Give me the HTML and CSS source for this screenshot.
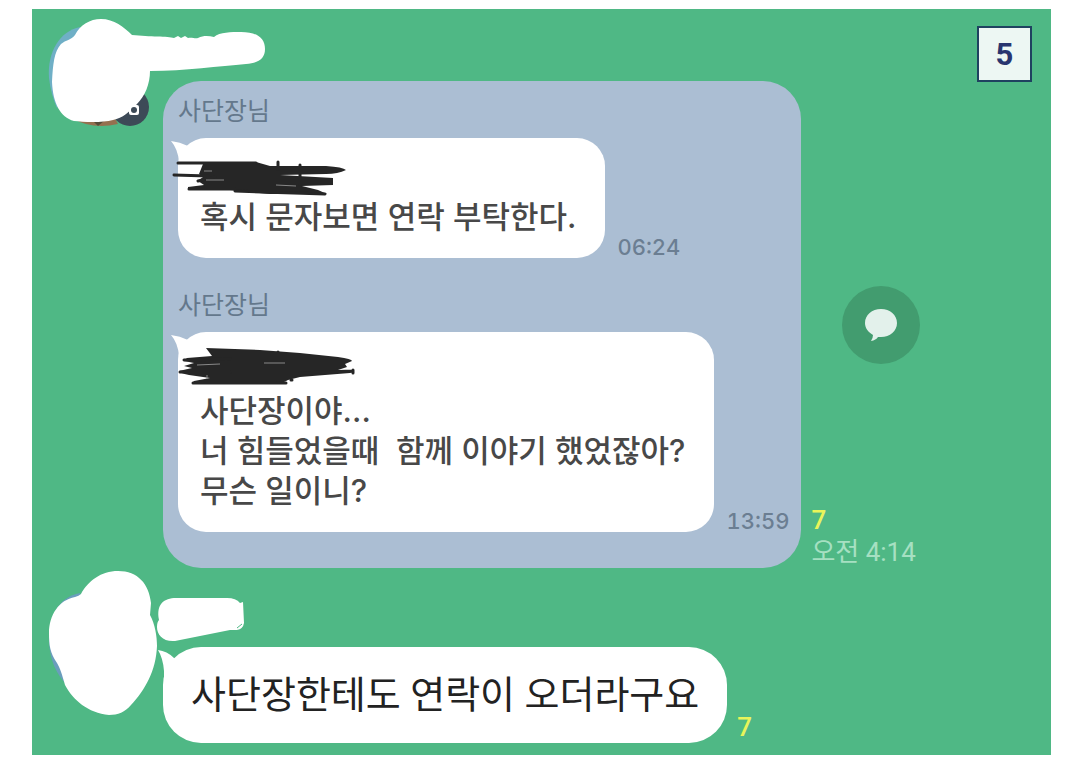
FILE: index.html
```html
<!DOCTYPE html>
<html lang="ko">
<head>
  <meta charset="UTF-8">
  <meta name="viewport" content="width=device-width, initial-scale=1.0">
  <title>사단장님</title>
  <link rel="stylesheet" href="styles.css">
</head>
<body>
  <main class="chat">
    <div class="page-number">5</div>

    <article class="message">
      <div class="avatar">
        <svg class="avatar-mask first" viewBox="32 9 240 120" width="240" height="120" aria-hidden="true">
          <path fill="#6fafc6" d="M80 27C60 31 47 52 49 78Q51 95 57 108L90 60Z"/>
          <path fill="#95704f" d="M72 118Q92 130 118 124L112 112H80Z"/>
          <path fill="#554c38" d="M92 120L104 121L98 126Z"/>
          <circle cx="130" cy="107" r="19" fill="#3d4a57"/>
          <path fill="#fff" d="M75 35C80 25 90 19 101 19C114 19 124 27 132 35C150 37 168 36 174 38L178 36L181 38L185 36L188 38C192 37 195 39 198 38C204 35 209 36 214 37C220 32 231 32 241 32C257 32 265 38 265 49C265 59 258 63 246 64C220 66 185 71 150 71C150 84 145 96 137 104C129 112 123 118 113 120C102 123 83 122 74 121C60 117 53 103 52 82C53 64 54 52 61 44C66 40 71 40 75 35Z"/>
          <path fill="#fff" d="M120 109H125V115H120ZM129 107Q129 105 131 105H137Q139 105 139 107V113Q139 115 137 115H131Q129 115 129 113Z"/>
          <circle cx="134" cy="110" r="3" fill="#3d4a57"/>
        </svg>
      </div>

      <section class="shared">
        <div class="quote">
          <div class="name">사단장님</div>
          <div class="line">
            <div class="bubble">
              <svg class="tail" viewBox="0 0 24 30" width="24" height="30" aria-hidden="true"><path d="M0 1Q9 2 17 6L24 16L8 30V22Q7 9 0 1Z"/></svg>
              <div class="redacted">
                <svg viewBox="168 157 190 40" width="190" height="40" aria-hidden="true">
                  <path class="fill" d="M203 164L256 162L270 166L326 166Q343 167 346 170Q338 174 326 174L280 175L333 178V185L302 186L318 190L327 194L270 194L230 190L188 190V187L204 185L198 181L203 177L199 174Z"/>
                  <path class="stroke" d="M178 163H256M174 175L208 176M189 189H235M278 162V169M300 165V184M198 181L215 177M235 191L325 194"/>
                  <path class="gap" d="M204 171H212M206 180H224M276 185L296 186"/>
                </svg>
              </div>
              <p>혹시 문자보면 연락 부탁한다.</p>
            </div>
            <time class="time">06:24</time>
          </div>
        </div>

        <div class="quote">
          <div class="name">사단장님</div>
          <div class="line">
            <div class="bubble">
              <svg class="tail" viewBox="0 0 24 30" width="24" height="30" aria-hidden="true"><path d="M0 1Q9 2 17 6L24 16L8 30V22Q7 9 0 1Z"/></svg>
              <div class="redacted">
                <svg viewBox="168 351 190 40" width="190" height="40" aria-hidden="true">
                  <path class="fill" d="M206 348L260 350L300 353L338 357Q352 359 352 361L345 364L347 367L338 370L353 371L350 373L300 377L288 380L282 383L230 384H192L194 381L210 378L189 375Q179 373 179 371L192 368L184 366L194 363L184 361L187 358L212 356Z"/>
                  <path class="stroke" d="M184 360L230 359M180 372H230M193 383H286M300 373L352 371M353 370V373M291 380H292M278 352V383"/>
                  <path class="gap" d="M197 365L220 364M264 363H285M207 375V379"/>
                </svg>
              </div>
              <p>사단장이야...</p>
              <p>너 힘들었을때&nbsp; 함께 이야기 했었잖아?</p>
              <p>무슨 일이니?</p>
            </div>
            <time class="time">13:59</time>
          </div>
        </div>
      </section>

      <div class="side">
        <button class="share" type="button" aria-label="댓글">
          <svg viewBox="0 0 34 34" width="34" height="34" aria-hidden="true"><path d="M17 1C26 1 33 7 33 15S26 29 17 29Q15 29 14 29Q12 32 7 33Q9 30 9 27C4 24 1 20 1 15C1 7 8 1 17 1Z"/></svg>
        </button>
        <div class="meta">
          <span class="unread">7</span>
          <time class="sent">오전 4:14</time>
        </div>
      </div>
    </article>

    <article class="message">
      <div class="avatar">
        <svg class="avatar-mask second" viewBox="32 567 240 152" width="240" height="152" aria-hidden="true">
          <path fill="#6a9dbd" d="M80 593C58 597 48 618 49 642C50 660 56 674 67 685L90 640Z"/>
          <path fill="#fff" d="M81 594C88 581 101 571 118 571C138 571 149 584 151 603L150 615C155 624 157 636 157 646C156 671 145 690 131 705C125 712 118 715 109 715C88 713 73 700 65 685C62 674 60 668 57 663C50 653 49 645 49 633C49 615 59 600 75 597Q79 596 81 594Z"/>
          <path fill="#fff" d="M159 620C156 604 164 598 176 598H227Q236 598 240 603L243 602L244 623Q243 629 237 630L230 630L175 641C163 642 157 635 157 627Q157 622 159 620Z"/>
          <path fill="none" stroke="#4fb885" d="M237 628L242 624"/>
        </svg>
      </div>
      <div class="bubble large">
        <svg class="tail" viewBox="0 0 24 30" width="24" height="30" aria-hidden="true"><path d="M0 1Q9 2 16 9L24 16L6 30V22Q5 9 0 1Z"/></svg>
        <p>사단장한테도 연락이 오더라구요</p>
      </div>
      <div class="meta">
        <span class="unread">7</span>
      </div>
    </article>
  </main>
</body>
</html>
```

FILE: styles.css
```css
body {
  margin: 0;
  background: #fff;
  font-family: Roboto, "Noto Sans CJK KR", sans-serif;
}
p {
  margin: 0;
}
.chat {
  position: relative;
  display: flex;
  flex-direction: column;
  gap: 79px;
  margin: 9px 29px 0 32px;
  padding: 72px 0 12px;
  background: #4fb885;
}
.page-number {
  position: absolute;
  top: 17px;
  right: 19px;
  width: 51px;
  padding-top: 2px;
  border: 2px solid #1f4260;
  background: #edf7f3;
  color: #28356f;
  font: bold 31px/50px Roboto, sans-serif;
  text-align: center;
}
.message {
  display: flex;
  align-items: stretch;
}
.avatar {
  position: relative;
  flex: none;
  width: 131px;
}
.avatar-mask {
  position: absolute;
  left: 0;
}
.avatar-mask.first {
  top: -72px;
}
.avatar-mask.second {
  top: -80px;
}
.shared {
  display: flex;
  flex-direction: column;
  gap: 31px;
  padding: 14px 12px 36px 15px;
  border-radius: 38px;
  background: #abbed3;
  font-family: Inter, "Noto Sans CJK KR", sans-serif;
}
.name {
  margin-bottom: 11px;
  color: #64788c;
  font-size: 25px;
  line-height: 32px;
}
.line {
  display: flex;
  align-items: flex-end;
  gap: 12px;
}
.bubble {
  position: relative;
  padding: 19px 29px 21px 22px;
  border-radius: 28px;
  background: #fff;
  color: #484848;
  font-size: 31px;
  font-weight: 500;
  line-height: 40px;
  white-space: nowrap;
}
.bubble.large {
  padding: 20px 28px;
  border-radius: 38px;
  color: #222;
  font-size: 38px;
  font-weight: 400;
  line-height: 56px;
}
.tail {
  position: absolute;
  top: 2px;
  left: -7px;
  fill: #fff;
}
.large .tail {
  left: -5px;
}
.redacted {
  position: relative;
  height: 40px;
}
.redacted svg {
  position: absolute;
  top: 0;
  left: -32px;
  overflow: visible;
}
.redacted .fill {
  fill: #262626;
}
.redacted .stroke {
  fill: none;
  stroke: #262626;
  stroke-width: 3;
  stroke-linecap: round;
}
.redacted .gap {
  fill: none;
  stroke: #888;
  stroke-width: 1;
}
.time {
  color: #6b7e92;
  font: 500 22px/22px Inter, sans-serif;
  font-variant-numeric: tabular-nums;
}
.side {
  display: grid;
  grid-template-rows: 1fr auto 1fr;
  margin-left: 10px;
}
.share {
  display: flex;
  grid-row: 2;
  align-items: center;
  justify-content: center;
  width: 78px;
  height: 78px;
  margin-left: 31px;
  padding: 0;
  border: 0;
  border-radius: 50%;
  background: #429c6f;
  cursor: pointer;
}
.share svg {
  fill: #e3f1eb;
}
.meta {
  display: flex;
  flex-direction: column;
  align-self: flex-end;
  font-size: 26px;
  line-height: 32px;
}
.side .meta {
  grid-row: 3;
}
.message > .meta {
  margin-left: 10px;
}
.unread {
  color: #e9f45a;
  font-weight: 500;
}
.sent {
  color: #a6e0c2;
}
```
